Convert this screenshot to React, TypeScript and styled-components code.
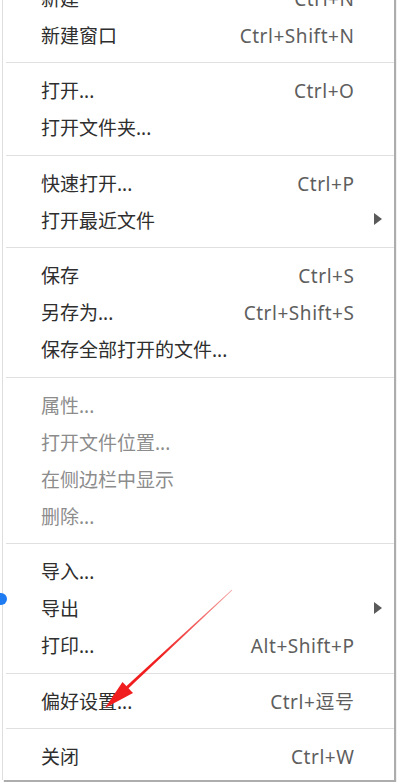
import styled, { createGlobalStyle } from 'styled-components';

const GlobalStyle = createGlobalStyle`
  html, body {
    margin: 0;
    padding: 0;
    background: #ffffff;
    overflow: hidden;
  }
`

type Entry =
  | { kind: 'sep' }
  | { kind: 'item'; label: string; shortcut?: string; submenu?: boolean; disabled?: boolean }

const entries: Entry[] = [
  { kind: 'item', label: '新建', shortcut: 'Ctrl+N' },
  { kind: 'item', label: '新建窗口', shortcut: 'Ctrl+Shift+N' },
  { kind: 'sep' },
  { kind: 'item', label: '打开...', shortcut: 'Ctrl+O' },
  { kind: 'item', label: '打开文件夹...' },
  { kind: 'sep' },
  { kind: 'item', label: '快速打开...', shortcut: 'Ctrl+P' },
  { kind: 'item', label: '打开最近文件', submenu: true },
  { kind: 'sep' },
  { kind: 'item', label: '保存', shortcut: 'Ctrl+S' },
  { kind: 'item', label: '另存为...', shortcut: 'Ctrl+Shift+S' },
  { kind: 'item', label: '保存全部打开的文件...' },
  { kind: 'sep' },
  { kind: 'item', label: '属性...', disabled: true },
  { kind: 'item', label: '打开文件位置...', disabled: true },
  { kind: 'item', label: '在侧边栏中显示', disabled: true },
  { kind: 'item', label: '删除...', disabled: true },
  { kind: 'sep' },
  { kind: 'item', label: '导入...' },
  { kind: 'item', label: '导出', submenu: true },
  { kind: 'item', label: '打印...', shortcut: 'Alt+Shift+P' },
  { kind: 'sep' },
  { kind: 'item', label: '偏好设置...', shortcut: 'Ctrl+逗号' },
  { kind: 'sep' },
  { kind: 'item', label: '关闭', shortcut: 'Ctrl+W' },
]

const Page = styled.div`
  position: relative;
  width: 398px;
  height: 782px;
  overflow: hidden;
  font-family: "Noto Sans", "Noto Sans CJK SC", sans-serif;
`

const Menu = styled.div`
  margin: -21px 0 0 2px;
  width: 392px;
  padding-bottom: 5px;
  background: #ffffff;
  border-left: 1px solid #dedede;
  box-sizing: border-box;
  box-shadow: 2px 2px 1px rgba(0, 0, 0, 0.32);
  display: flex;
  flex-direction: column;
`

const Item = styled.div<{ $disabled?: boolean }>`
  height: 37px;
  box-sizing: border-box;
  padding: 3px 12px 0 38px;
  display: grid;
  grid-template-columns: 1fr auto 28px;
  align-items: center;
  font-size: 19px;
  line-height: 1;
  color: ${p => (p.$disabled ? '#8c8c8c' : '#2e2e2e')};
  white-space: nowrap;
`

const Shortcut = styled.span`
  color: #5e5e5e;
  letter-spacing: 0.55px;
  margin-right: -0.5px;
`

const ArrowCell = styled.span`
  justify-self: end;
  display: flex;
  align-items: center;
`

const SubArrow = styled.span`
  width: 0;
  height: 0;
  border-top: 6px solid transparent;
  border-bottom: 6px solid transparent;
  border-left: 8px solid #5a5a5a;
  margin-top: -4px;
`

const Separator = styled.div`
  height: 1px;
  margin: 9px 0 8.5px 3px;
  background: #e0e0e0;
`

const FocusDot = styled.div`
  position: absolute;
  left: -5px;
  top: 593px;
  width: 12px;
  height: 12px;
  border-radius: 50%;
  background: #1e7bf2;
`

const Annotation = styled.svg`
  position: absolute;
  left: 0;
  top: 0;
  pointer-events: none;
`

const RedArrow = () => (
  <Annotation width="398" height="782" viewBox="0 0 398 782">
    <defs>
      <linearGradient id="arrowFade" x1="232" y1="590" x2="160" y2="657" gradientUnits="userSpaceOnUse">
        <stop offset="0" stopColor="#f4a0a0" />
        <stop offset="1" stopColor="#f01e1e" />
      </linearGradient>
    </defs>
    <polygon
      points="232.3,590.3 231.7,589.7 126,686.5 128,688.7"
      fill="url(#arrowFade)"
    />
    <polygon points="105,708 122.5,682 133,693" fill="#f01e1e" />
  </Annotation>
)

export default function App() {
  return (
    <Page>
      <GlobalStyle />
      <Menu>
        {entries.map((e, i) =>
          e.kind === 'sep' ? (
            <Separator key={i} />
          ) : (
            <Item key={i} $disabled={e.disabled}>
              <span>{e.label}</span>
              <Shortcut>{e.shortcut}</Shortcut>
              <ArrowCell>{e.submenu && <SubArrow />}</ArrowCell>
            </Item>
          )
        )}
      </Menu>
      <FocusDot />
      <RedArrow />
    </Page>
  );
}
